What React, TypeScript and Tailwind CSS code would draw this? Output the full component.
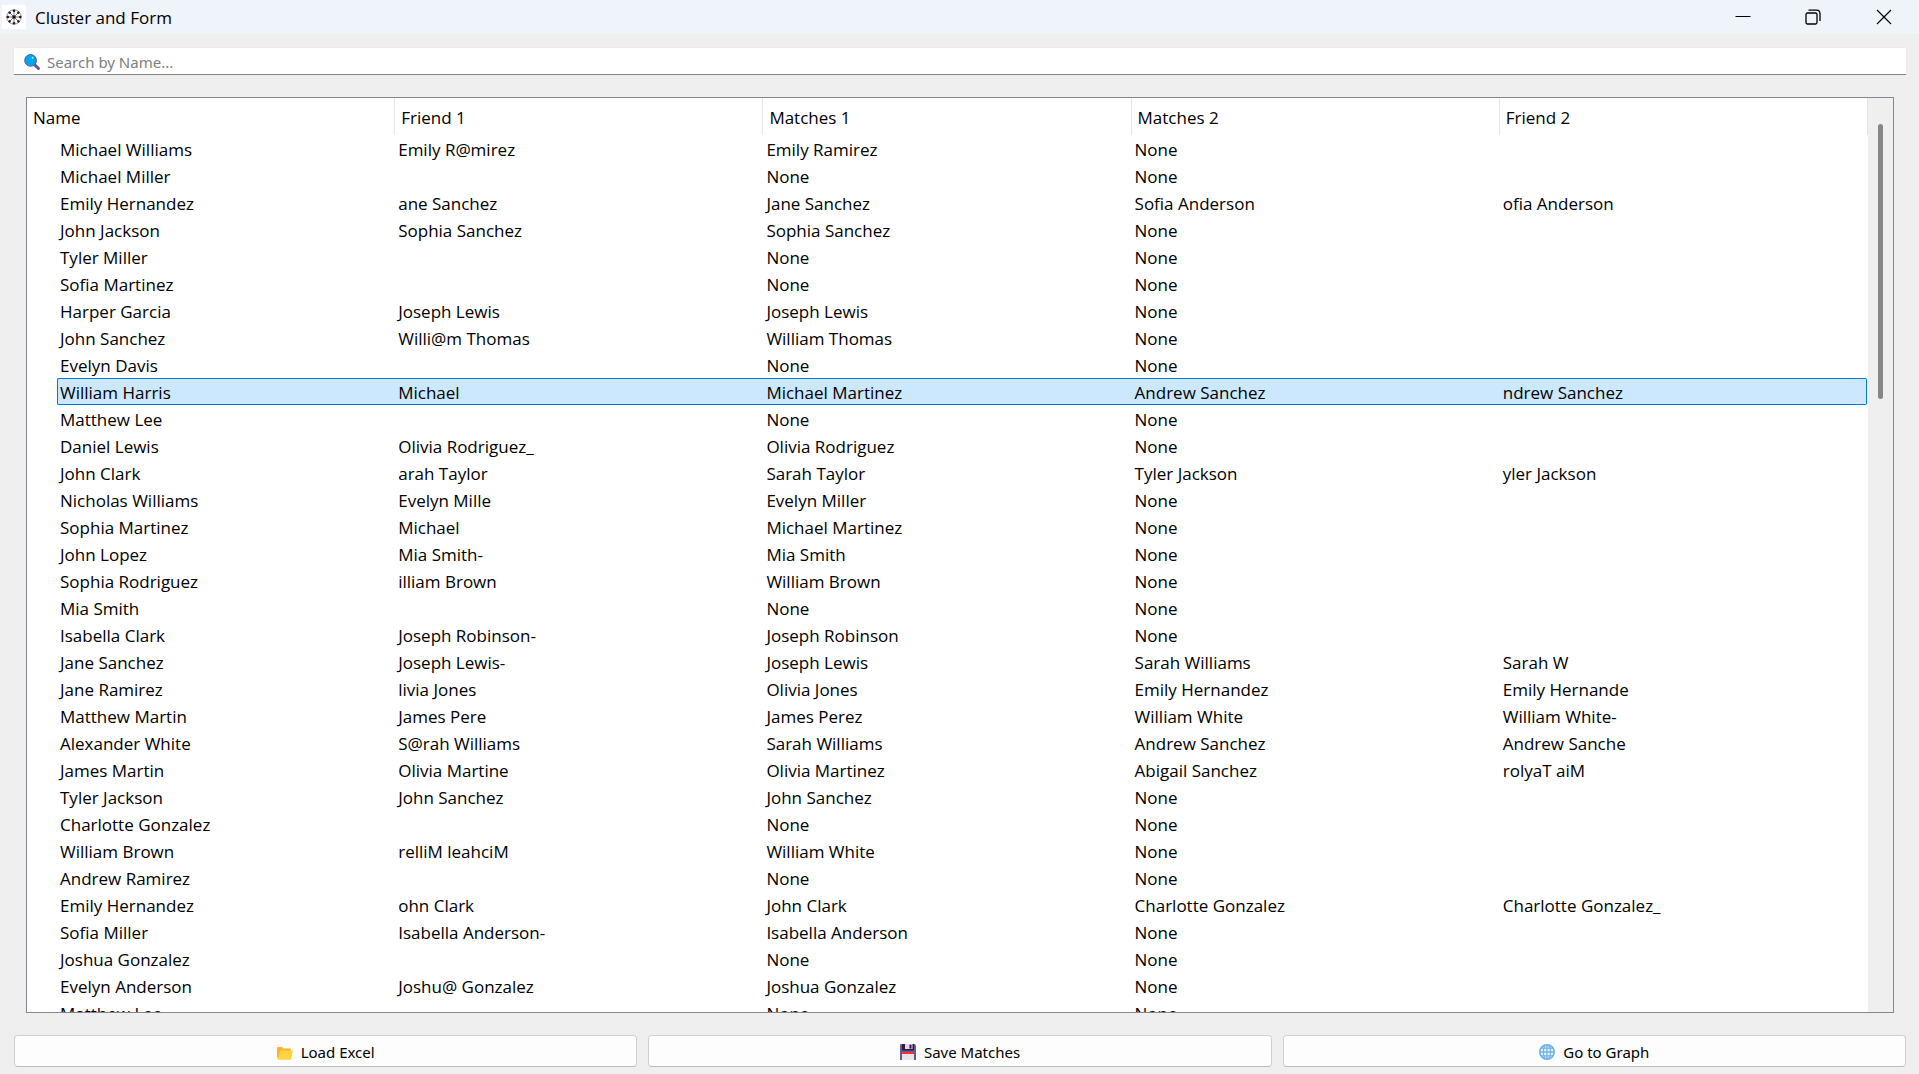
const columns = ['Name', 'Friend 1', 'Matches 1', 'Matches 2', 'Friend 2'];

const rows: string[][] = [
  ['Michael Williams', 'Emily R@mirez', 'Emily Ramirez', 'None', ''],
  ['Michael Miller', '', 'None', 'None', ''],
  ['Emily Hernandez', 'ane Sanchez', 'Jane Sanchez', 'Sofia Anderson', 'ofia Anderson'],
  ['John Jackson', 'Sophia Sanchez', 'Sophia Sanchez', 'None', ''],
  ['Tyler Miller', '', 'None', 'None', ''],
  ['Sofia Martinez', '', 'None', 'None', ''],
  ['Harper Garcia', 'Joseph Lewis', 'Joseph Lewis', 'None', ''],
  ['John Sanchez', 'Willi@m Thomas', 'William Thomas', 'None', ''],
  ['Evelyn Davis', '', 'None', 'None', ''],
  ['William Harris', 'Michael', 'Michael Martinez', 'Andrew Sanchez', 'ndrew Sanchez'],
  ['Matthew Lee', '', 'None', 'None', ''],
  ['Daniel Lewis', 'Olivia Rodriguez_', 'Olivia Rodriguez', 'None', ''],
  ['John Clark', 'arah Taylor', 'Sarah Taylor', 'Tyler Jackson', 'yler Jackson'],
  ['Nicholas Williams', 'Evelyn Mille', 'Evelyn Miller', 'None', ''],
  ['Sophia Martinez', 'Michael', 'Michael Martinez', 'None', ''],
  ['John Lopez', 'Mia Smith-', 'Mia Smith', 'None', ''],
  ['Sophia Rodriguez', 'illiam Brown', 'William Brown', 'None', ''],
  ['Mia Smith', '', 'None', 'None', ''],
  ['Isabella Clark', 'Joseph Robinson-', 'Joseph Robinson', 'None', ''],
  ['Jane Sanchez', 'Joseph Lewis-', 'Joseph Lewis', 'Sarah Williams', 'Sarah W'],
  ['Jane Ramirez', 'livia Jones', 'Olivia Jones', 'Emily Hernandez', 'Emily Hernande'],
  ['Matthew Martin', 'James Pere', 'James Perez', 'William White', 'William White-'],
  ['Alexander White', 'S@rah Williams', 'Sarah Williams', 'Andrew Sanchez', 'Andrew Sanche'],
  ['James Martin', 'Olivia Martine', 'Olivia Martinez', 'Abigail Sanchez', 'rolyaT aiM'],
  ['Tyler Jackson', 'John Sanchez', 'John Sanchez', 'None', ''],
  ['Charlotte Gonzalez', '', 'None', 'None', ''],
  ['William Brown', 'relliM leahciM', 'William White', 'None', ''],
  ['Andrew Ramirez', '', 'None', 'None', ''],
  ['Emily Hernandez', 'ohn Clark', 'John Clark', 'Charlotte Gonzalez', 'Charlotte Gonzalez_'],
  ['Sofia Miller', 'Isabella Anderson-', 'Isabella Anderson', 'None', ''],
  ['Joshua Gonzalez', '', 'None', 'None', ''],
  ['Evelyn Anderson', 'Joshu@ Gonzalez', 'Joshua Gonzalez', 'None', ''],
  ['Matthew Lee', '', 'None', 'None', ''],
];

const selectedRow = 9;
const spokes = [0, 45, 90, 135, 180, 225, 270, 315];

function AppIcon() {
  return (
    <svg viewBox="0 0 24 24" className="size-6 bg-white" aria-hidden="true">
      <circle cx="12" cy="12" r="7.2" fill="none" stroke="#777" strokeWidth="0.8" />
      {spokes.map((a) => (
        <g key={a} transform={`rotate(${a} 12 12)`}>
          <line x1="12" y1="11" x2="12" y2="6" stroke="#444" strokeWidth="0.7" />
          <circle cx="12" cy="5.8" r="1.3" fill="#222" />
        </g>
      ))}
      <circle cx="12" cy="12" r="1.7" fill="#111" />
    </svg>
  );
}

function SearchIcon() {
  return (
    <svg viewBox="0 0 16 16" className="size-4 shrink-0" aria-hidden="true">
      <path d="M10.2 10.4l4.2 4" stroke="#635994" strokeWidth="3" strokeLinecap="round" />
      <circle cx="6.6" cy="6.4" r="5.9" fill="#00a6ed" stroke="#635994" strokeWidth="1" />
      <circle cx="8.6" cy="3.8" r="1" fill="#b5ecff" />
    </svg>
  );
}

function FolderIcon() {
  return (
    <svg viewBox="0 0 16 16" className="size-4 shrink-0" aria-hidden="true">
      <path d="M0 3.800Q0 3 .8 3H5l1.600 1.500H13q1 0 1 1V14H1.200Q0 14 0 13z" fill="#ffb02e" />
      <path d="M4.200 6.500H15q1 0 .8 1l-1.500 7.300q-.2 1-1.200 1H1q-.5 0-.3-.6L3 7.300q.2-.8 1.200-.8z" fill="#fcd53f" />
    </svg>
  );
}

function FloppyIcon() {
  return (
    <svg viewBox="0 0 16 16" className="size-4 shrink-0" aria-hidden="true">
      <path d="M1.2 0H14.8L16 1.4V16H0V1.2Q0 0 1.2 0z" fill="#635994" />
      <path d="M2 0h12v5.2q0 1.3-1.3 1.3H3.3Q2 6.5 2 5.2z" fill="#321b41" />
      <path d="M5 0h7.5v5H5z" fill="#e1d8ec" />
      <path d="M9.5 .6h2v4h-2z" fill="#321b41" />
      <path d="M2 8h12v8H2z" fill="#e6e6e6" />
      <path d="M2 8h12v2H2z" fill="#f8312f" />
    </svg>
  );
}

function GlobeIcon() {
  return (
    <svg viewBox="0 0 16 16" className="size-4 shrink-0" aria-hidden="true">
      <circle cx="8" cy="8" r="7.2" fill="#e8f6ff" stroke="#6cb0e6" strokeWidth="1.6" />
      <g fill="none" stroke="#74b3e3" strokeWidth="1.3">
        <ellipse cx="8" cy="8" rx="3.6" ry="7.2" />
        <path d="M8 .7v14.6M.7 8h14.6M2 4.2h12M2 11.8h12" />
      </g>
    </svg>
  );
}

const actions = [
  { label: 'Load Excel', Icon: FolderIcon },
  { label: 'Save Matches', Icon: FloppyIcon },
  { label: 'Go to Graph', Icon: GlobeIcon },
];

function TitleBar() {
  return (
    <header className="flex h-[34px] shrink-0 items-center bg-[#eff3fa] pl-0.5">
      <AppIcon />
      <h1 className="grow pt-0.5 pl-[9px] text-[17px] leading-6">Cluster and Form</h1>
      <div className="flex h-full">
        <button aria-label="Minimize" className="flex w-[70px] items-center justify-center">
          <svg viewBox="0 0 16 16" className="size-4" fill="none" stroke="#000">
            <path d="M.5 7.5h15" />
          </svg>
        </button>
        <button aria-label="Restore" className="flex w-[70px] items-center justify-center">
          <svg viewBox="0 0 16 16" className="size-4" fill="none" stroke="#000" strokeWidth="1.3">
            <rect x="1" y="4" width="11" height="11" rx="1.5" />
            <path d="M3.5 1.2H11.500Q15 1.200 15 4.700V12" />
          </svg>
        </button>
        <button aria-label="Close" className="flex w-[71px] items-center justify-center">
          <svg viewBox="0 0 16 16" className="size-4" fill="none" stroke="#000" strokeWidth="1.2">
            <path d="M1 1l14 14M15 1L1 15" />
          </svg>
        </button>
      </div>
    </header>
  );
}

function cellClass(selected: boolean, index: number) {
  const base = 'h-[27px] truncate border-y leading-[28px]';
  const inset = index === 0 ? 'border-l pl-[2px]' : 'pl-[3px]';
  if (!selected) return `${base} ${inset} border-transparent`;
  const color = 'border-[#0078d4] bg-[#cce8ff]';
  if (index === 0) return `${base} ${inset} ${color} rounded-l-[2px]`;
  if (index === columns.length - 1) return `${base} ${inset} ${color} mr-px rounded-r-[2px] border-r`;
  return `${base} ${inset} ${color}`;
}

function MatchTable() {
  return (
    <div className="mx-3 flex min-h-0 grow overflow-hidden border border-[#828790] bg-white">
      <div className="min-w-0 grow overflow-hidden">
        <table className="w-full table-fixed border-separate border-spacing-0 text-left text-[17px]">
          <thead>
            <tr>
              {columns.map((name) => (
                <th key={name} scope="col" className="h-[37px] border-r border-[#e5e5e5] p-0 pt-0.5 pl-1.5 font-normal">
                  {name}
                </th>
              ))}
            </tr>
          </thead>
          <tbody>
            {rows.map((row, r) => (
              <tr key={r} aria-selected={r === selectedRow}>
                {row.map((value, c) => (
                  <td key={c} className={c === 0 ? 'p-0 pl-[30px]' : 'p-0'}>
                    <div className={cellClass(r === selectedRow, c)}>{value}</div>
                  </td>
                ))}
              </tr>
            ))}
          </tbody>
        </table>
      </div>
      <div className="flex w-[25px] shrink-0 justify-center bg-[#efefef] pt-[26px]">
        <div className="h-[275px] w-[5px] rounded-full bg-[#868686]" />
      </div>
    </div>
  );
}

export default function App() {
  return (
    <div className="flex h-screen flex-col bg-[#efefef] font-['Open_Sans',sans-serif] text-black">
      <TitleBar />
      <main className="flex min-h-0 grow flex-col pt-3.5 pr-[13px] pb-[7px] pl-3.5">
        <label className="mb-[22px] flex h-[27px] shrink-0 items-center border-b border-[#868686] bg-white pt-px pl-2.5 shadow-[0_0_0_1px_#eaeaea]">
          <SearchIcon />
          <input
            type="text"
            aria-label="Search by Name"
            placeholder="Search by Name..."
            className="h-full min-w-0 grow pt-px pl-[7px] font-['Noto_Sans',sans-serif] text-[15px] outline-none placeholder:text-[#808080]"
          />
        </label>
        <MatchTable />
        <div className="mt-[22px] grid shrink-0 grid-cols-3 gap-[11px]">
          {actions.map(({ label, Icon }) => (
            <button
              key={label}
              className="flex h-8 items-center justify-center gap-2 rounded border border-[#d0d0d0] border-b-[#bababa] bg-[#fdfdfd] pt-0.5 font-['Noto_Sans',sans-serif] text-[15px]"
            >
              <Icon />
              {label}
            </button>
          ))}
        </div>
      </main>
    </div>
  );
}
